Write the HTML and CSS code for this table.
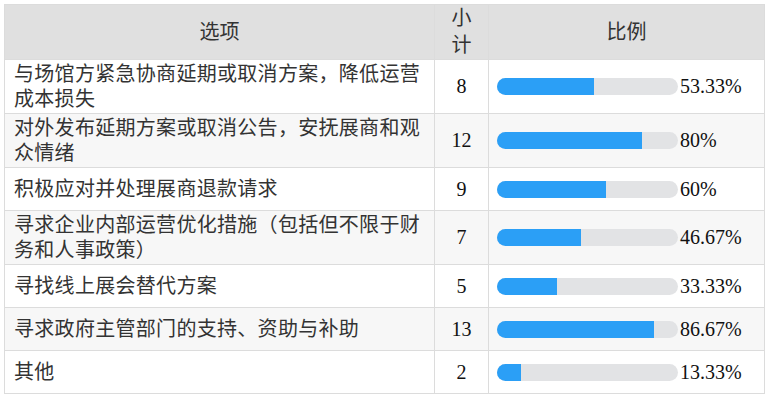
FILE: index.html
```html
<!DOCTYPE html>
<html lang="zh-CN">
<head>
<meta charset="utf-8">
<title>统计表</title>
<link rel="stylesheet" href="styles.css">
</head>
<body>
<table class="stats">
  <colgroup>
    <col class="c-opt">
    <col class="c-num">
    <col class="c-pct">
  </colgroup>
  <thead>
    <tr>
      <th>选项</th>
      <th class="th-num">小<br>计</th>
      <th>比例</th>
    </tr>
  </thead>
  <tbody>
    <tr class="two">
      <td class="opt">与场馆方紧急协商延期或取消方案，降低运营成本损失</td>
      <td class="num">8</td>
      <td class="pct"><div class="pct-wrap"><div class="track"><div class="fill" style="width:53.33%"></div></div><span class="val">53.33%</span></div></td>
    </tr>
    <tr class="two alt">
      <td class="opt">对外发布延期方案或取消公告，安抚展商和观众情绪</td>
      <td class="num">12</td>
      <td class="pct"><div class="pct-wrap"><div class="track"><div class="fill" style="width:80%"></div></div><span class="val">80%</span></div></td>
    </tr>
    <tr class="one">
      <td class="opt">积极应对并处理展商退款请求</td>
      <td class="num">9</td>
      <td class="pct"><div class="pct-wrap"><div class="track"><div class="fill" style="width:60%"></div></div><span class="val">60%</span></div></td>
    </tr>
    <tr class="two alt">
      <td class="opt">寻求企业内部运营优化措施（包括但不限于财务和人事政策）</td>
      <td class="num">7</td>
      <td class="pct"><div class="pct-wrap"><div class="track"><div class="fill" style="width:46.67%"></div></div><span class="val">46.67%</span></div></td>
    </tr>
    <tr class="one">
      <td class="opt">寻找线上展会替代方案</td>
      <td class="num">5</td>
      <td class="pct"><div class="pct-wrap"><div class="track"><div class="fill" style="width:33.33%"></div></div><span class="val">33.33%</span></div></td>
    </tr>
    <tr class="one alt">
      <td class="opt">寻求政府主管部门的支持、资助与补助</td>
      <td class="num">13</td>
      <td class="pct"><div class="pct-wrap"><div class="track"><div class="fill" style="width:86.67%"></div></div><span class="val">86.67%</span></div></td>
    </tr>
    <tr class="one">
      <td class="opt">其他</td>
      <td class="num">2</td>
      <td class="pct"><div class="pct-wrap"><div class="track"><div class="fill" style="width:13.33%"></div></div><span class="val">13.33%</span></div></td>
    </tr>
  </tbody>
</table>
</body>
</html>
```
FILE: styles.css
```css
html, body {
  margin: 0;
  padding: 0;
  background: #ffffff;
}

body {
  padding: 4px;
  font-family: "Liberation Serif", "Noto Sans CJK SC", serif;
  font-size: 20px;
  color: #222222;
}

.stats {
  border-collapse: collapse;
  table-layout: fixed;
  width: 760px;
}

.c-opt { width: 430px; }
.c-num { width: 54px; }
.c-pct { width: 276px; }

.stats th,
.stats td {
  border: 1px solid #dcdcdc;
}

.stats th {
  background: #e0e0e0;
  font-weight: normal;
  line-height: 27px;
  height: 54px;
  padding: 0;
  text-align: center;
  color: #333333;
}

.stats td {
  padding: 2px 8px 2px 9px;
  line-height: 24.5px;
  vertical-align: middle;
}

.stats tr.one td {
  height: 38px;
}

.stats tr.alt td {
  background: #f7f7f7;
}

.opt {
  color: #333333;
  letter-spacing: 0.3px;
}

.stats td.num {
  text-align: center;
  padding: 0;
  color: #111111;
}

.stats td.pct {
  padding: 0 0 0 8px;
}

.pct-wrap {
  display: flex;
  align-items: center;
}

.track {
  width: 181px;
  height: 17px;
  border-radius: 8.5px;
  background: #e2e3e5;
  overflow: hidden;
  flex: none;
}

.fill {
  height: 100%;
  background: #2b9ff6;
}

.val {
  margin-left: 2px;
  color: #111111;
}
```
